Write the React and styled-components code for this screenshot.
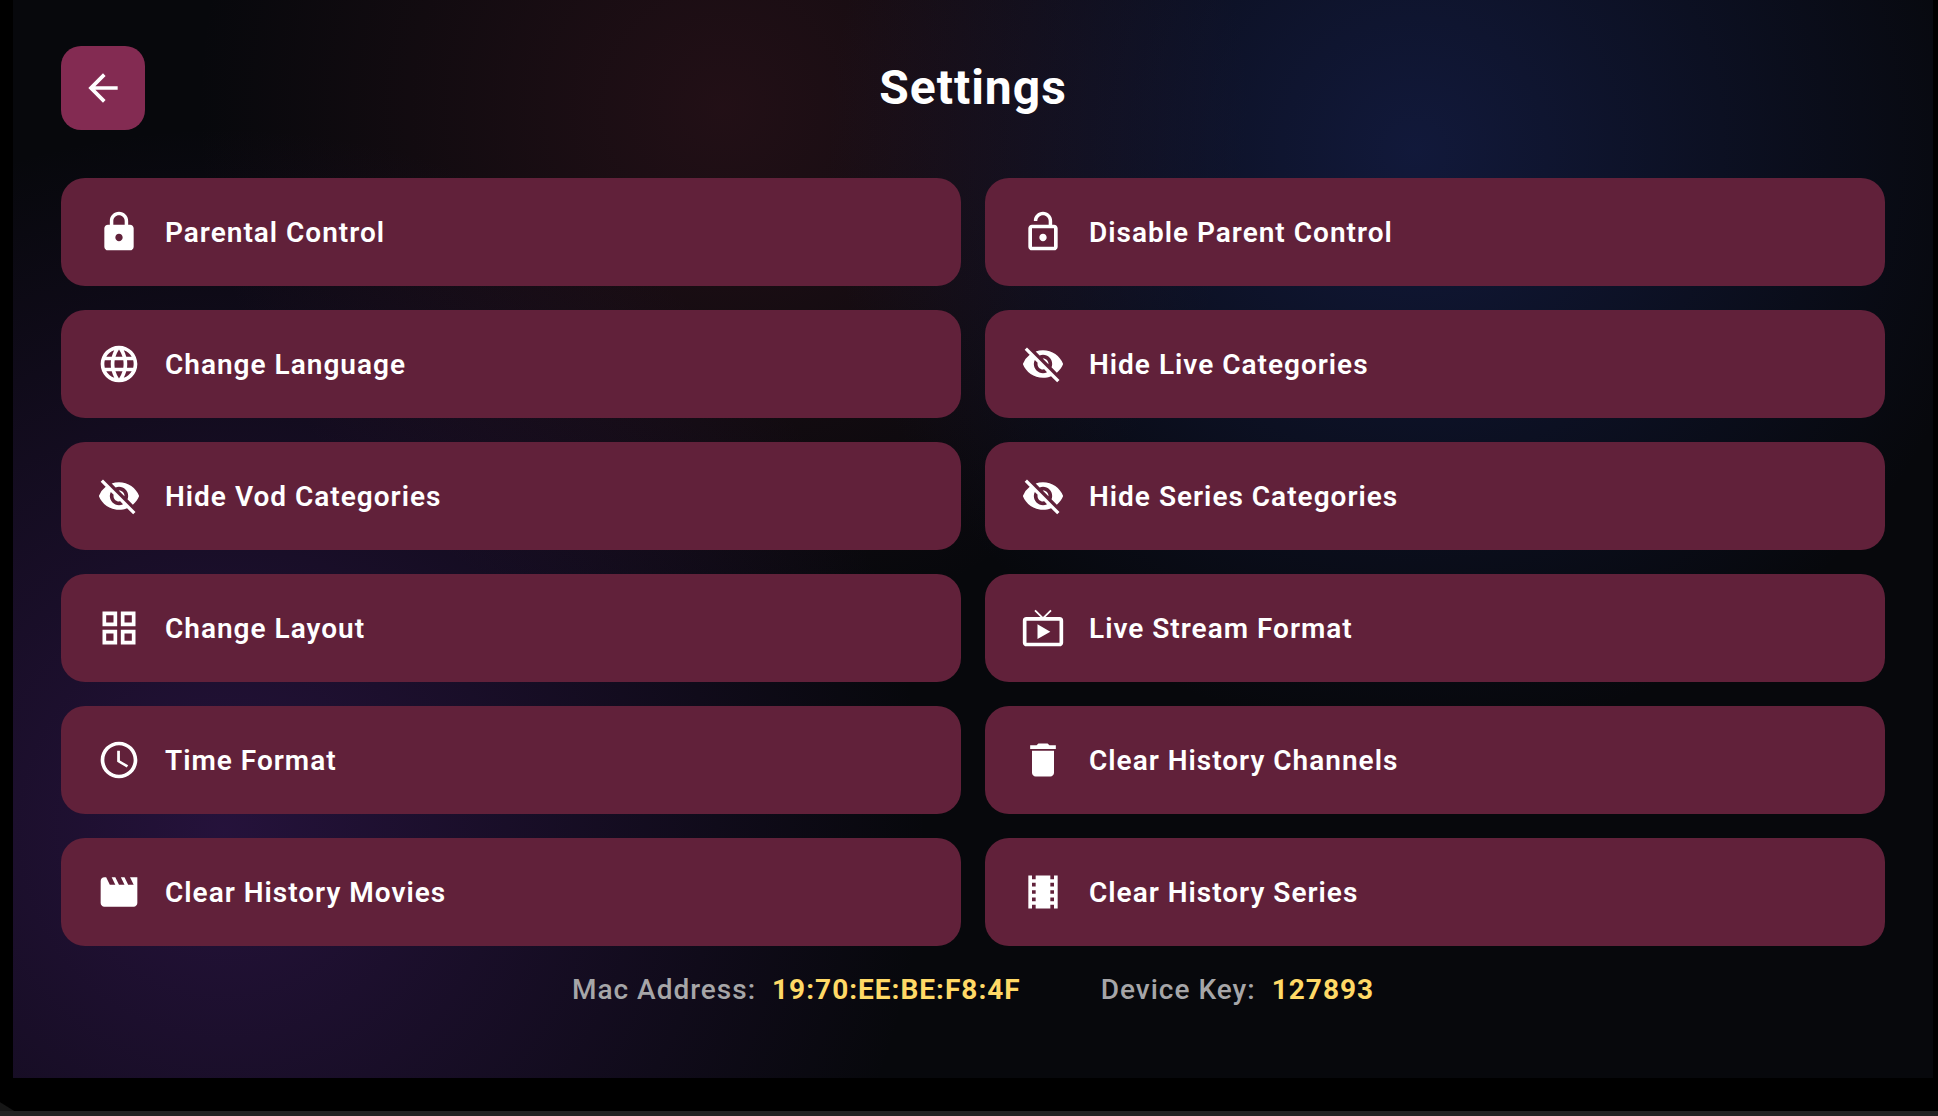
import React from 'react';
import styled, { createGlobalStyle } from 'styled-components';
import {
  MdAccessTime,
  MdArrowBack,
  MdDelete,
  MdGridView,
  MdLanguage,
  MdLiveTv,
  MdLock,
  MdLockOpen,
  MdMovie,
  MdTheaters,
  MdVisibilityOff
} from 'react-icons/md';

const GlobalStyle = createGlobalStyle`
  * {
    box-sizing: border-box;
  }

  body {
    margin: 0;
    background: #000000;
    font-family: Roboto, 'Liberation Sans', sans-serif;
    letter-spacing: 1px;
  }
`;

const Frame = styled.div`
  display: flex;
  flex-direction: column;
  min-height: 100vh;
  padding: 0 5px 0 13px;
  border-bottom: 5px solid #222222;
  background: linear-gradient(32deg, #161616 7px, #000000 8px);
`;

const Screen = styled.main`
  flex: 1;
  margin-bottom: 33px;
  padding: 46px 48px 64px;
  background:
    radial-gradient(circle at 73% 14%, rgba(33, 50, 128, 0.4) 0%, transparent 35%),
    radial-gradient(circle at 11% 77%, rgba(90, 36, 142, 0.36) 0%, transparent 37%),
    radial-gradient(circle at 37% 10%, rgba(130, 42, 58, 0.22) 0%, transparent 34%),
    #07080c;
`;

const Header = styled.header`
  display: grid;
  grid-template-columns: 84px 1fr 84px;
  align-items: center;
  margin-bottom: 48px;
`;

const BackButton = styled.button`
  display: flex;
  align-items: center;
  justify-content: center;
  height: 84px;
  padding: 0;
  border: none;
  border-radius: 20px;
  background: #832b52;
  color: #ffffff;
  font-size: 44px;
  cursor: pointer;
`;

const Title = styled.h1`
  margin: 0;
  color: #ffffff;
  font-size: 48px;
  font-weight: 700;
  line-height: 56px;
  text-align: center;
`;

const SettingsGrid = styled.div`
  display: grid;
  grid-template-columns: 1fr 1fr;
  gap: 24px;
`;

const SettingButton = styled.button`
  display: flex;
  align-items: center;
  gap: 24px;
  height: 108px;
  padding: 0 36px;
  border: none;
  border-radius: 24px;
  background: #61213a;
  color: #ffffff;
  font-family: inherit;
  font-size: 28px;
  font-weight: 600;
  letter-spacing: inherit;
  text-align: left;
  cursor: pointer;

  svg {
    flex-shrink: 0;
    font-size: 44px;
  }
`;

const DeviceInfo = styled.footer`
  display: flex;
  justify-content: center;
  gap: 80px;
  margin-top: 28px;
  font-size: 28px;
  line-height: 32px;
`;

const InfoItem = styled.div`
  display: flex;
  gap: 16px;
`;

const InfoLabel = styled.span`
  color: #a6a6a8;
  font-weight: 500;
`;

const InfoValue = styled.span`
  color: #ffd966;
  font-weight: 700;
`;

const settings = [
  { label: 'Parental Control', icon: MdLock },
  { label: 'Disable Parent Control', icon: MdLockOpen },
  { label: 'Change Language', icon: MdLanguage },
  { label: 'Hide Live Categories', icon: MdVisibilityOff },
  { label: 'Hide Vod Categories', icon: MdVisibilityOff },
  { label: 'Hide Series Categories', icon: MdVisibilityOff },
  { label: 'Change Layout', icon: MdGridView },
  { label: 'Live Stream Format', icon: MdLiveTv },
  { label: 'Time Format', icon: MdAccessTime },
  { label: 'Clear History Channels', icon: MdDelete },
  { label: 'Clear History Movies', icon: MdMovie },
  { label: 'Clear History Series', icon: MdTheaters }
];

function App() {
  return (
    <Frame>
      <GlobalStyle />
      <Screen>
        <Header>
          <BackButton aria-label="Back">
            <MdArrowBack />
          </BackButton>
          <Title>Settings</Title>
        </Header>

        <SettingsGrid>
          {settings.map(({ label, icon: Icon }) => (
            <SettingButton key={label}>
              <Icon />
              {label}
            </SettingButton>
          ))}
        </SettingsGrid>

        <DeviceInfo>
          <InfoItem>
            <InfoLabel>Mac Address:</InfoLabel>
            <InfoValue>19:70:EE:BE:F8:4F</InfoValue>
          </InfoItem>
          <InfoItem>
            <InfoLabel>Device Key:</InfoLabel>
            <InfoValue>127893</InfoValue>
          </InfoItem>
        </DeviceInfo>
      </Screen>
    </Frame>
  );
}

export default App;
